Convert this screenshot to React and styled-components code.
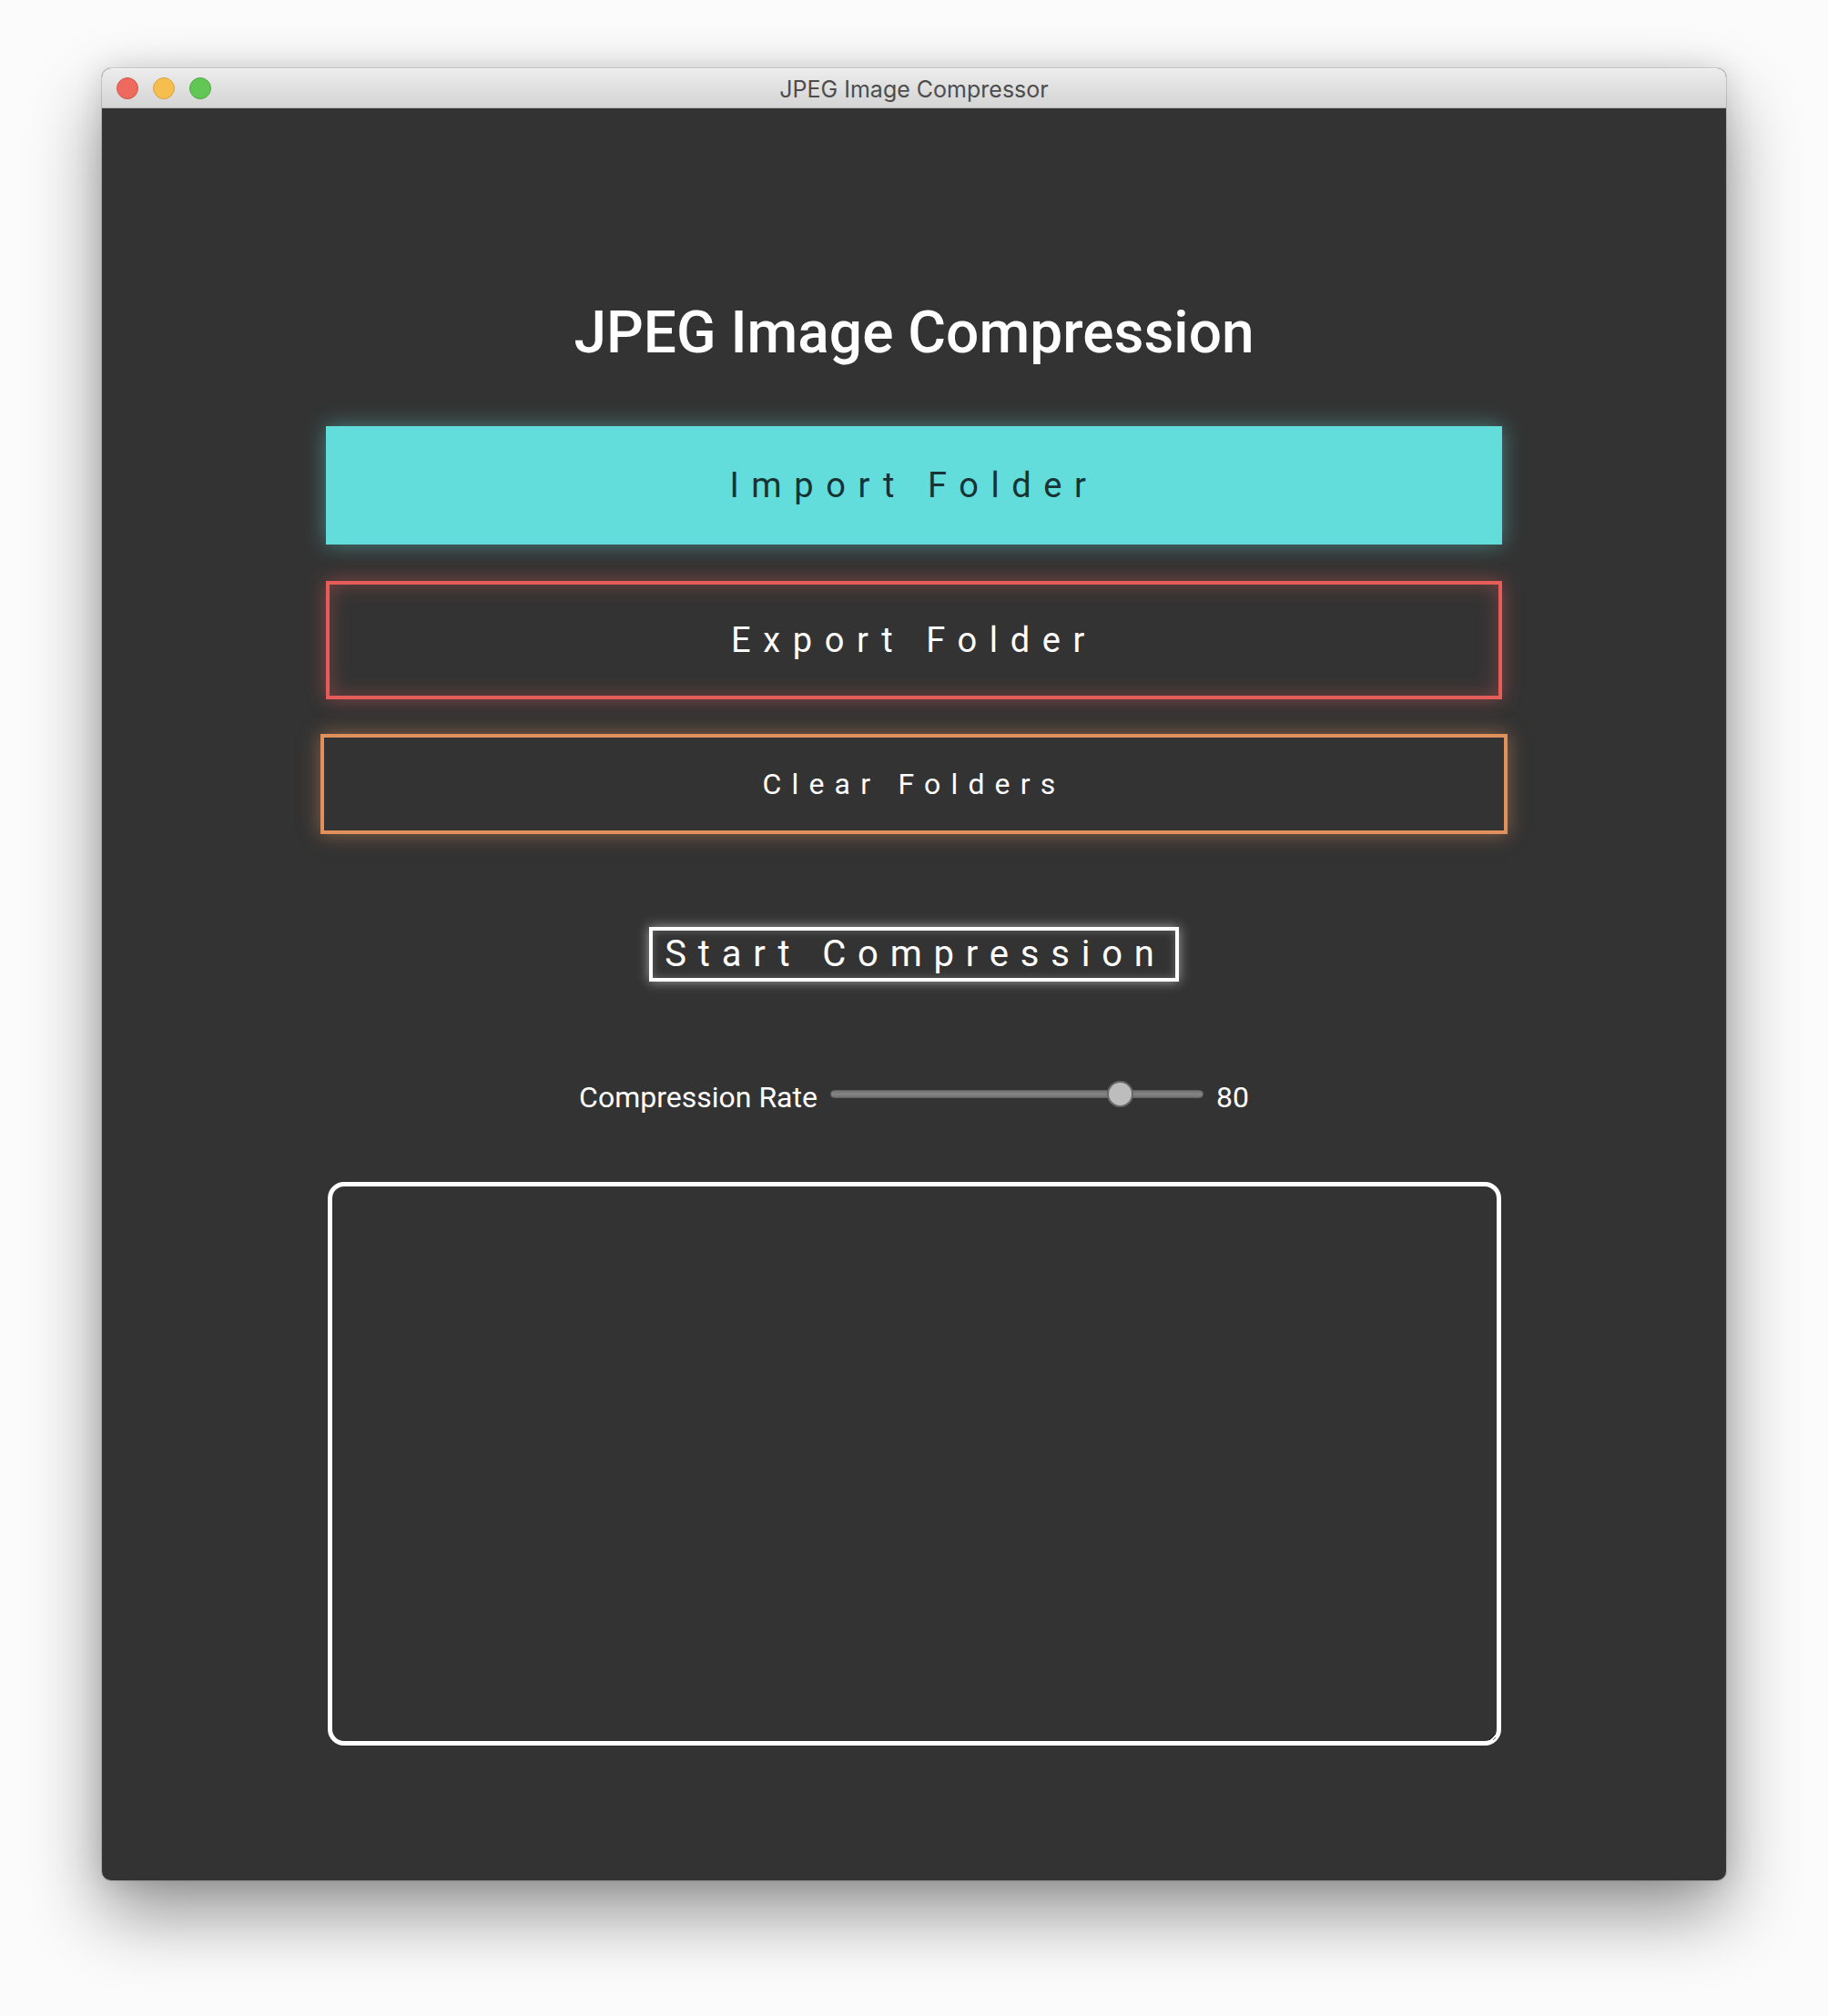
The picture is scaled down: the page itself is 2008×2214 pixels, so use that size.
import React, { useState } from 'react';
import styled, { createGlobalStyle } from 'styled-components';

const GlobalStyle = createGlobalStyle`
  html, body {
    margin: 0;
    padding: 0;
    background: #ffffff;
  }
  body {
    font-family: Roboto, "Liberation Sans", sans-serif;
  }
`;

const Page = styled.div`
  width: 2008px;
  height: 2214px;
  padding: 75px 0 0 112px;
  box-sizing: border-box;
  background: #fbfbfb;
`;

const Window = styled.div`
  width: 1784px;
  height: 1990px;
  display: flex;
  flex-direction: column;
  border-radius: 10px;
  overflow: hidden;
  background: #333333;
  box-shadow: 0 0 0 1px rgba(0, 0, 0, 0.12), 0 36px 80px rgba(0, 0, 0, 0.42),
    0 0 30px rgba(0, 0, 0, 0.12);
`;

const TitleBar = styled.div`
  height: 44px;
  flex: none;
  display: grid;
  grid-template-columns: 1fr auto 1fr;
  align-items: center;
  box-sizing: border-box;
  background: linear-gradient(#ececec, #d4d4d4);
  border-top: 1px solid #f6f6f6;
  border-bottom: 1px solid #b3b3b3;
`;

const Lights = styled.div`
  display: flex;
  gap: 16px;
  padding-left: 16px;
`;

const Light = styled.span`
  width: 24px;
  height: 24px;
  border-radius: 50%;
  box-sizing: border-box;
  background: ${(p) => p.fill};
  border: 1px solid ${(p) => p.edge};
`;

const WindowTitle = styled.div`
  font-family: Inter, "Liberation Sans", sans-serif;
  font-size: 25px;
  color: #4d4d4d;
  padding-top: 2px;
`;

const Content = styled.div`
  flex: 1;
  display: flex;
  flex-direction: column;
  align-items: center;
  padding-top: 209px;
  color: #ffffff;
`;

const Heading = styled.h1`
  margin: 0;
  font-family: Roboto, "Liberation Sans", sans-serif;
  font-weight: 500;
  font-size: 64px;
  line-height: 75px;
  color: #ffffff;
`;

const FolderButton = styled.button`
  box-sizing: border-box;
  width: ${(p) => p.width}px;
  height: ${(p) => p.height}px;
  margin-top: ${(p) => p.gap}px;
  padding: 0;
  font-family: Roboto, "Liberation Sans", sans-serif;
  font-weight: 400;
  font-size: ${(p) => p.size}px;
  letter-spacing: ${(p) => p.spacing}px;
  color: ${(p) => (p.filled ? '#173333' : '#ffffff')};
  background: ${(p) => (p.filled ? p.tone : '#333333')};
  border: ${(p) => (p.filled ? 'none' : `4px solid ${p.tone}`)};
  box-shadow: ${(p) => p.glow};
  cursor: pointer;
`;

const StartButton = styled.button`
  box-sizing: border-box;
  height: 60px;
  margin-top: 102px;
  padding: 0 10px 0 13px;
  font-family: Roboto, "Liberation Sans", sans-serif;
  font-size: 40px;
  line-height: 52px;
  letter-spacing: 12.8px;
  color: #ffffff;
  background: #333333;
  border: 4px solid #ffffff;
  box-shadow: 0 0 12px rgba(255, 255, 255, 0.55), inset 0 0 10px rgba(255, 255, 255, 0.25);
  cursor: pointer;
`;

const RateRow = styled.div`
  display: flex;
  align-items: center;
  gap: 14px;
  margin-top: 108px;
  font-size: 32px;
  line-height: 38px;
`;

const RateText = styled.span`
  color: #ffffff;
`;

const Range = styled.input`
  -webkit-appearance: none;
  appearance: none;
  width: 410px;
  height: 29px;
  margin: 0 0 8px;
  padding: 0;
  background: transparent;

  &::-webkit-slider-runnable-track {
    height: 9px;
    border-radius: 5px;
    box-sizing: border-box;
    background: linear-gradient(#727272, #858585 50%, #727272);
    border: 1px solid #626262;
  }

  &::-webkit-slider-thumb {
    -webkit-appearance: none;
    width: 29px;
    height: 29px;
    margin-top: -11px;
    border-radius: 50%;
    box-sizing: border-box;
    background: #bdbdbd;
    border: 2px solid #686868;
  }
`;

const Log = styled.textarea`
  box-sizing: border-box;
  width: 1289px;
  height: 619px;
  margin-top: 74px;
  background: #333333;
  color: #ffffff;
  border: 5px solid #ffffff;
  border-radius: 18px;
  outline: none;
  resize: both;
  color-scheme: dark;
  font-family: Roboto, "Liberation Sans", sans-serif;
  font-size: 28px;
`;

const folders = [
  {
    label: 'Import Folder',
    filled: true,
    tone: '#63dcdc',
    width: 1292,
    height: 130,
    gap: 65,
    size: 38,
    spacing: 13.6,
    glow: '0 0 22px rgba(99, 220, 220, 0.45)',
  },
  {
    label: 'Export Folder',
    filled: false,
    tone: '#e65c59',
    width: 1292,
    height: 130,
    gap: 40,
    size: 38,
    spacing: 13.6,
    glow: '0 0 20px rgba(230, 92, 89, 0.45), inset 0 0 22px rgba(230, 92, 89, 0.35)',
  },
  {
    label: 'Clear Folders',
    filled: false,
    tone: '#e0915b',
    width: 1304,
    height: 110,
    gap: 38,
    size: 32,
    spacing: 11.2,
    glow: '0 0 20px rgba(224, 145, 91, 0.5)',
  },
];

const App = () => {
  const [rate, setRate] = useState(80);

  return (
    <Page>
      <GlobalStyle />
      <Window>
        <TitleBar>
          <Lights>
            <Light fill="#ee6a5f" edge="#d5544b" />
            <Light fill="#f6be4f" edge="#d9a33f" />
            <Light fill="#62c655" edge="#4fa944" />
          </Lights>
          <WindowTitle>JPEG Image Compressor</WindowTitle>
          <span />
        </TitleBar>
        <Content>
          <Heading>JPEG Image Compression</Heading>
          {folders.map((f) => (
            <FolderButton
              key={f.label}
              filled={f.filled}
              tone={f.tone}
              width={f.width}
              height={f.height}
              gap={f.gap}
              size={f.size}
              spacing={f.spacing}
              glow={f.glow}
            >
              {f.label}
            </FolderButton>
          ))}
          <StartButton>Start Compression</StartButton>
          <RateRow>
            <RateText>Compression Rate</RateText>
            <Range
              type="range"
              min="0"
              max="100"
              value={rate}
              onChange={(e) => setRate(Number(e.target.value))}
            />
            <RateText>{rate}</RateText>
          </RateRow>
          <Log />
        </Content>
      </Window>
    </Page>
  );
};

export default App;
